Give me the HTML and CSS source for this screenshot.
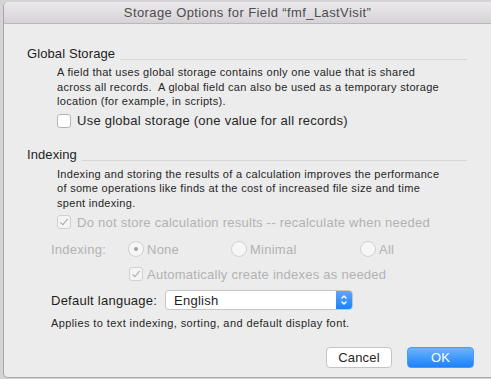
FILE: index.html
```html
<!DOCTYPE html>
<html lang="en">
<head>
    <meta charset="UTF-8">
    <title>Storage Options</title>
    <link rel="stylesheet" href="styles.css">
</head>
<body>
    <div class="window">
        <div class="titlebar">Storage Options for Field “fmf_LastVisit”</div>

        <div class="content">
            <!-- Global storage -->
            <div class="group">
                <div class="group-head"><span>Global Storage</span><div class="rule"></div></div>
                <p class="desc">A field that uses global storage contains only one value that is shared<br>across all records.&nbsp; A global field can also be used as a temporary storage<br>location (for example, in scripts).</p>
                <div class="check desc-indent">
                    <span class="box"></span>Use global storage (one value for all records)
                </div>
            </div>

            <!-- Indexing -->
            <div class="group indexing">
                <div class="group-head"><span>Indexing</span><div class="rule"></div></div>
                <p class="desc">Indexing and storing the results of a calculation improves the performance<br>of some operations like finds at the cost of increased file size and time<br>spent indexing.</p>
                <div class="check desc-indent disabled">
                    <span class="box checked"></span>Do not store calculation results -- recalculate when needed
                </div>

                <div class="radio-row disabled">
                    <span class="row-label">Indexing:</span>
                    <span class="radio r-none"><span class="dot on"></span>None</span>
                    <span class="radio r-min"><span class="dot"></span>Minimal</span>
                    <span class="radio"><span class="dot"></span>All</span>
                </div>
                <div class="check auto disabled">
                    <span class="box checked"></span>Automatically create indexes as needed
                </div>

                <div class="lang-row">
                    <span class="lang-label">Default language:</span>
                    <div class="popup">
                        <span>English</span>
                        <span class="arrows">
                            <svg width="8" height="12" viewBox="0 0 8 12"><path d="M1.5 4.5 L4 2 L6.5 4.5 M1.5 7.5 L4 10 L6.5 7.5" fill="none" stroke="#fff" stroke-width="1.4"/></svg>
                        </span>
                    </div>
                </div>
                <p class="note">Applies to text indexing, sorting, and default display font.</p>
            </div>

            <div class="buttons">
                <button class="btn">Cancel</button>
                <button class="btn primary">OK</button>
            </div>
        </div>
    </div>
</body>
</html>
```

FILE: styles.css
```css
body {
    margin: 0;
    padding: 2px 0 0 3px;
    background-color: #d4d4d4;
    font-family: "Liberation Sans", Arial, sans-serif;
    color: #262626;
    overflow: hidden;
}

.window {
    width: 492px;
    height: 376px;
    background-color: #ececec;
    border-left: 1px solid #a8a8a8;
    border-bottom: 1px solid #a8a8a8;
    border-top-left-radius: 5px;
    border-bottom-left-radius: 5px;
    box-sizing: border-box;
    overflow: hidden;
}

.titlebar {
    height: 22px;
    line-height: 22px;
    text-align: center;
    font-size: 13px;
    letter-spacing: 0.4px;
    color: #4d4d4d;
    background: linear-gradient(#ebe9eb, #d5d3d5);
    border-bottom: 1px solid #b9b9b9;
    box-sizing: border-box;
    padding-right: 4px;
}

.content {
    padding: 21px 0 0 23px;
    letter-spacing: 0.25px;
}

.group-head {
    display: flex;
    align-items: center;
    font-size: 13px;
    color: #1e1e1e;
    height: 16px;
    width: 440px;
    letter-spacing: 0.1px;
}

.group-head .rule {
    flex: 1;
    height: 1px;
    background-color: #d6d6d6;
    margin: 12px 0 0 5px;
}

.desc {
    margin: 4px 0 0 30px;
    font-size: 11px;
    line-height: 14.5px;
    letter-spacing: 0.3px;
    white-space: nowrap;
}

.check {
    display: flex;
    align-items: center;
    font-size: 13px;
    height: 18px;
}

.desc-indent {
    margin: 3px 0 0 30px;
}

.box {
    width: 12px;
    height: 12px;
    border: 1px solid #b4b4b4;
    border-radius: 3px;
    background-color: #ffffff;
    margin-right: 6px;
    position: relative;
}

.box.checked::after {
    content: "";
    position: absolute;
    left: 4px;
    top: 1px;
    width: 3px;
    height: 7px;
    border: solid #a8a8a8;
    border-width: 0 1.2px 1.2px 0;
    transform: rotate(40deg);
}

.disabled {
    color: #b2b2b2;
}

.disabled .box {
    border-color: #d0d0d0;
    background-color: #f4f4f4;
}

.indexing {
    margin-top: 17px;
}

.radio-row {
    display: flex;
    align-items: center;
    font-size: 13px;
    margin: 9px 0 0 24px;
    height: 18px;
}

.row-label {
    width: 77px;
}

.radio {
    display: flex;
    align-items: center;
}

.r-none {
    width: 103px;
}

.r-min {
    width: 129px;
}

.dot {
    width: 14px;
    height: 14px;
    border: 1px solid #d0d0d0;
    border-radius: 50%;
    background-color: #f6f6f6;
    margin-right: 3px;
    position: relative;
}

.dot.on::after {
    content: "";
    position: absolute;
    left: 5px;
    top: 5px;
    width: 4px;
    height: 4px;
    border-radius: 50%;
    background-color: #a0a0a0;
}

.auto {
    margin: 7px 0 0 102px;
}

.auto .box {
    margin-right: 4px;
}

.lang-row {
    display: flex;
    align-items: center;
    margin: 7px 0 0 24px;
    font-size: 13px;
    color: #1e1e1e;
}

.lang-label {
    width: 114px;
}

.popup {
    width: 188px;
    height: 20px;
    box-sizing: border-box;
    border: 1px solid #c6c6c6;
    border-radius: 4px;
    background-color: #ffffff;
    display: flex;
    align-items: center;
    justify-content: space-between;
    padding-left: 8px;
    overflow: hidden;
}

.arrows {
    width: 16px;
    height: 20px;
    background: linear-gradient(#5eaaf9, #1a7ff8);
    display: flex;
    align-items: center;
    justify-content: center;
}

.note {
    margin: 6px 0 0 24px;
    font-size: 11px;
    line-height: 14px;
    letter-spacing: 0.4px;
}

.buttons {
    display: flex;
    justify-content: flex-end;
    gap: 15px;
    width: 447px;
    margin-top: 17px;
}

.btn {
    width: 66px;
    height: 21px;
    font-family: inherit;
    font-size: 13px;
    letter-spacing: 0.2px;
    color: #262626;
    background-color: #ffffff;
    border: 1px solid #c4c4c4;
    border-radius: 4px;
    padding: 0;
}

.btn.primary {
    width: 67px;
    color: #ffffff;
    border-color: #4a9bf8;
    background: linear-gradient(#6cb4fb, #1b82fb);
}
```
